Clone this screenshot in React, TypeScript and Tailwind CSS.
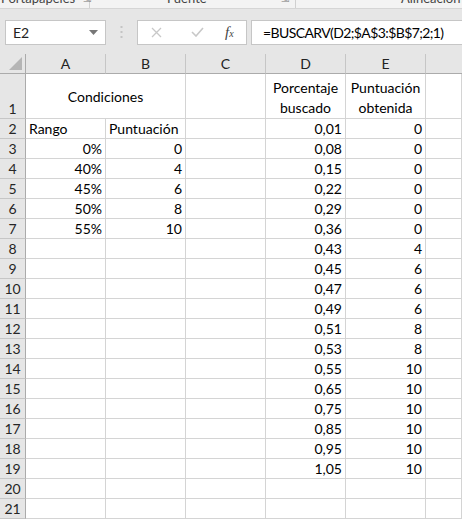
const cols = ["A", "B", "C", "D", "E"];

const aVals = ["", "0%", "40%", "45%", "50%", "55%"];
const bVals = ["", "0", "4", "6", "8", "10"];
const dVals = ["0,01", "0,08", "0,15", "0,22", "0,29", "0,36", "0,43", "0,45", "0,47", "0,49", "0,51", "0,53", "0,55", "0,65", "0,75", "0,85", "0,95", "1,05"];
const eVals = ["0", "0", "0", "0", "0", "0", "4", "6", "6", "6", "8", "8", "10", "10", "10", "10", "10", "10"];

const cell = "h-[20px] border-r border-b border-[#d4d4d4] bg-white px-[3px] leading-[19px] text-black overflow-hidden whitespace-nowrap";
const rowHead = "h-[20px] border-r border-b border-r-[#ababab] border-b-[#c6c6c6] bg-[#e6e6e6] text-center leading-[19px] text-[#262626]";

const App = () => {
  const rows = [];
  for (let r = 2; r <= 21; r++) {
    let a = "";
    let b = "";
    if (r === 2) {
      a = "Rango";
      b = "Puntuación";
    } else if (r <= 7) {
      a = aVals[r - 2];
      b = bVals[r - 2];
    }
    const d = dVals[r - 2] ?? "";
    const e = eVals[r - 2] ?? "";
    const left = r === 2;
    rows.push(
      <div key={r} className="contents">
        <div className={rowHead}>{r}</div>
        <div className={`${cell} ${left ? "text-left" : "text-right"}`}>{a}</div>
        <div className={`${cell} ${left ? "text-left" : "text-right"}`}>{b}</div>
        <div className={cell}></div>
        <div className={`${cell} text-right`}>{d}</div>
        <div className={`${cell} text-right`}>{e}</div>
        <div className={cell}></div>
      </div>
    );
  }

  return (
    <div className="w-[462px] h-[519px] overflow-hidden bg-[#e6e6e6] font-['Lato',sans-serif] text-[14px]">
      {/* ribbon group labels, cut off at the top */}
      <div className="h-[9px] bg-[#f3f3f3] border-b border-[#d5d5d5] overflow-hidden flex text-[13px] text-[#444] leading-[13px]">
        <div className="w-[90px] shrink-0 flex gap-[8px] -mt-[8px] pl-[1px] border-r border-[#d0d0d0]">
          <span>Portapapeles</span>
          <span className="text-[10px] text-[#777]">⇲</span>
        </div>
        <div className="w-[206px] shrink-0 flex justify-between -mt-[8px] pl-[77px] pr-[6px] border-r border-[#d0d0d0]">
          <span>Fuente</span>
          <span className="text-[10px] text-[#777]">⇲</span>
        </div>
        <div className="flex-1 -mt-[8px] pl-[105px]">
          <span>Alineación</span>
        </div>
      </div>

      {/* formula bar */}
      <div className="flex items-center h-[45px] pt-[1px]">
        <div className="ml-[5px] w-[101px] shrink-0 h-[25px] bg-white border border-[#c6c6c6] flex items-center justify-between pl-[7px] pr-[7px] text-[#222]">
          <span>E2</span>
          <svg width="9" height="5" viewBox="0 0 9 5"><path d="M0 0h9L4.5 5z" fill="#777" /></svg>
        </div>
        <div className="w-[31px] shrink-0 flex justify-center">
          <svg width="3" height="12" viewBox="0 0 3 12">
            <rect x="0.5" y="0" width="2" height="2" fill="#c4c4c4" />
            <rect x="0.5" y="5" width="2" height="2" fill="#c4c4c4" />
            <rect x="0.5" y="10" width="2" height="2" fill="#c4c4c4" />
          </svg>
        </div>
        <div className="w-[110px] shrink-0 h-[25px] bg-white border border-[#c6c6c6] flex items-center">
          <svg className="ml-[13px]" width="11" height="11" viewBox="0 0 11 11">
            <path d="M1 1l9 9M10 1l-9 9" stroke="#c8c8c8" strokeWidth="1.3" />
          </svg>
          <svg className="ml-[29px]" width="13" height="10" viewBox="0 0 13 10">
            <path d="M1 5l4 4 7-8" stroke="#c8c8c8" strokeWidth="1.6" fill="none" />
          </svg>
          <span className="ml-[21px] font-['Liberation_Serif',serif] italic text-[15px] text-[#444]">
            f<span className="text-[10px]">x</span>
          </span>
        </div>
        <div className="ml-[4px] flex-1 min-w-0 h-[25px] bg-white border border-r-0 border-[#c6c6c6] flex items-center pl-[11px] text-black whitespace-nowrap overflow-hidden tracking-[-0.6px]">
          =BUSCARV(D2;$A$3:$B$7;2;1)
        </div>
      </div>

      {/* sheet */}
      <div className="grid grid-cols-[26px_80px_80px_80px_80px_80px_1fr]">
        {/* column headers */}
        <div className="h-[20px] bg-[#e6e6e6] border-r border-b border-[#ababab] flex items-end justify-end pr-[3px] pb-[3px]">
          <svg width="13" height="13" viewBox="0 0 13 13"><path d="M13 0v13H0z" fill="#b5b5b5" /></svg>
        </div>
        {cols.map((c) => (
          <div key={c} className="h-[20px] bg-[#e6e6e6] border-r border-b border-r-[#c6c6c6] border-b-[#ababab] text-center leading-[19px] text-[#222]">
            {c}
          </div>
        ))}
        <div className="h-[20px] bg-[#e6e6e6] border-b border-[#ababab]"></div>

        {/* row 1 */}
        <div className={`${rowHead} h-[45px] flex items-end justify-center`}>1</div>
        <div className="col-span-2 h-[45px] border-r border-b border-[#d4d4d4] bg-white flex items-center justify-center pt-[1px]">
          Condiciones
        </div>
        <div className="h-[45px] border-r border-b border-[#d4d4d4] bg-white"></div>
        <div className="h-[45px] border-r border-b border-[#d4d4d4] bg-white flex flex-col items-center justify-end leading-[20px]">
          <span>Porcentaje</span>
          <span>buscado</span>
        </div>
        <div className="h-[45px] border-r border-b border-[#d4d4d4] bg-white flex flex-col items-center justify-end leading-[20px]">
          <span>Puntuación</span>
          <span>obtenida</span>
        </div>
        <div className="h-[45px] border-r border-b border-[#d4d4d4] bg-white"></div>

        {rows}
      </div>
    </div>
  );
};

export default App;
